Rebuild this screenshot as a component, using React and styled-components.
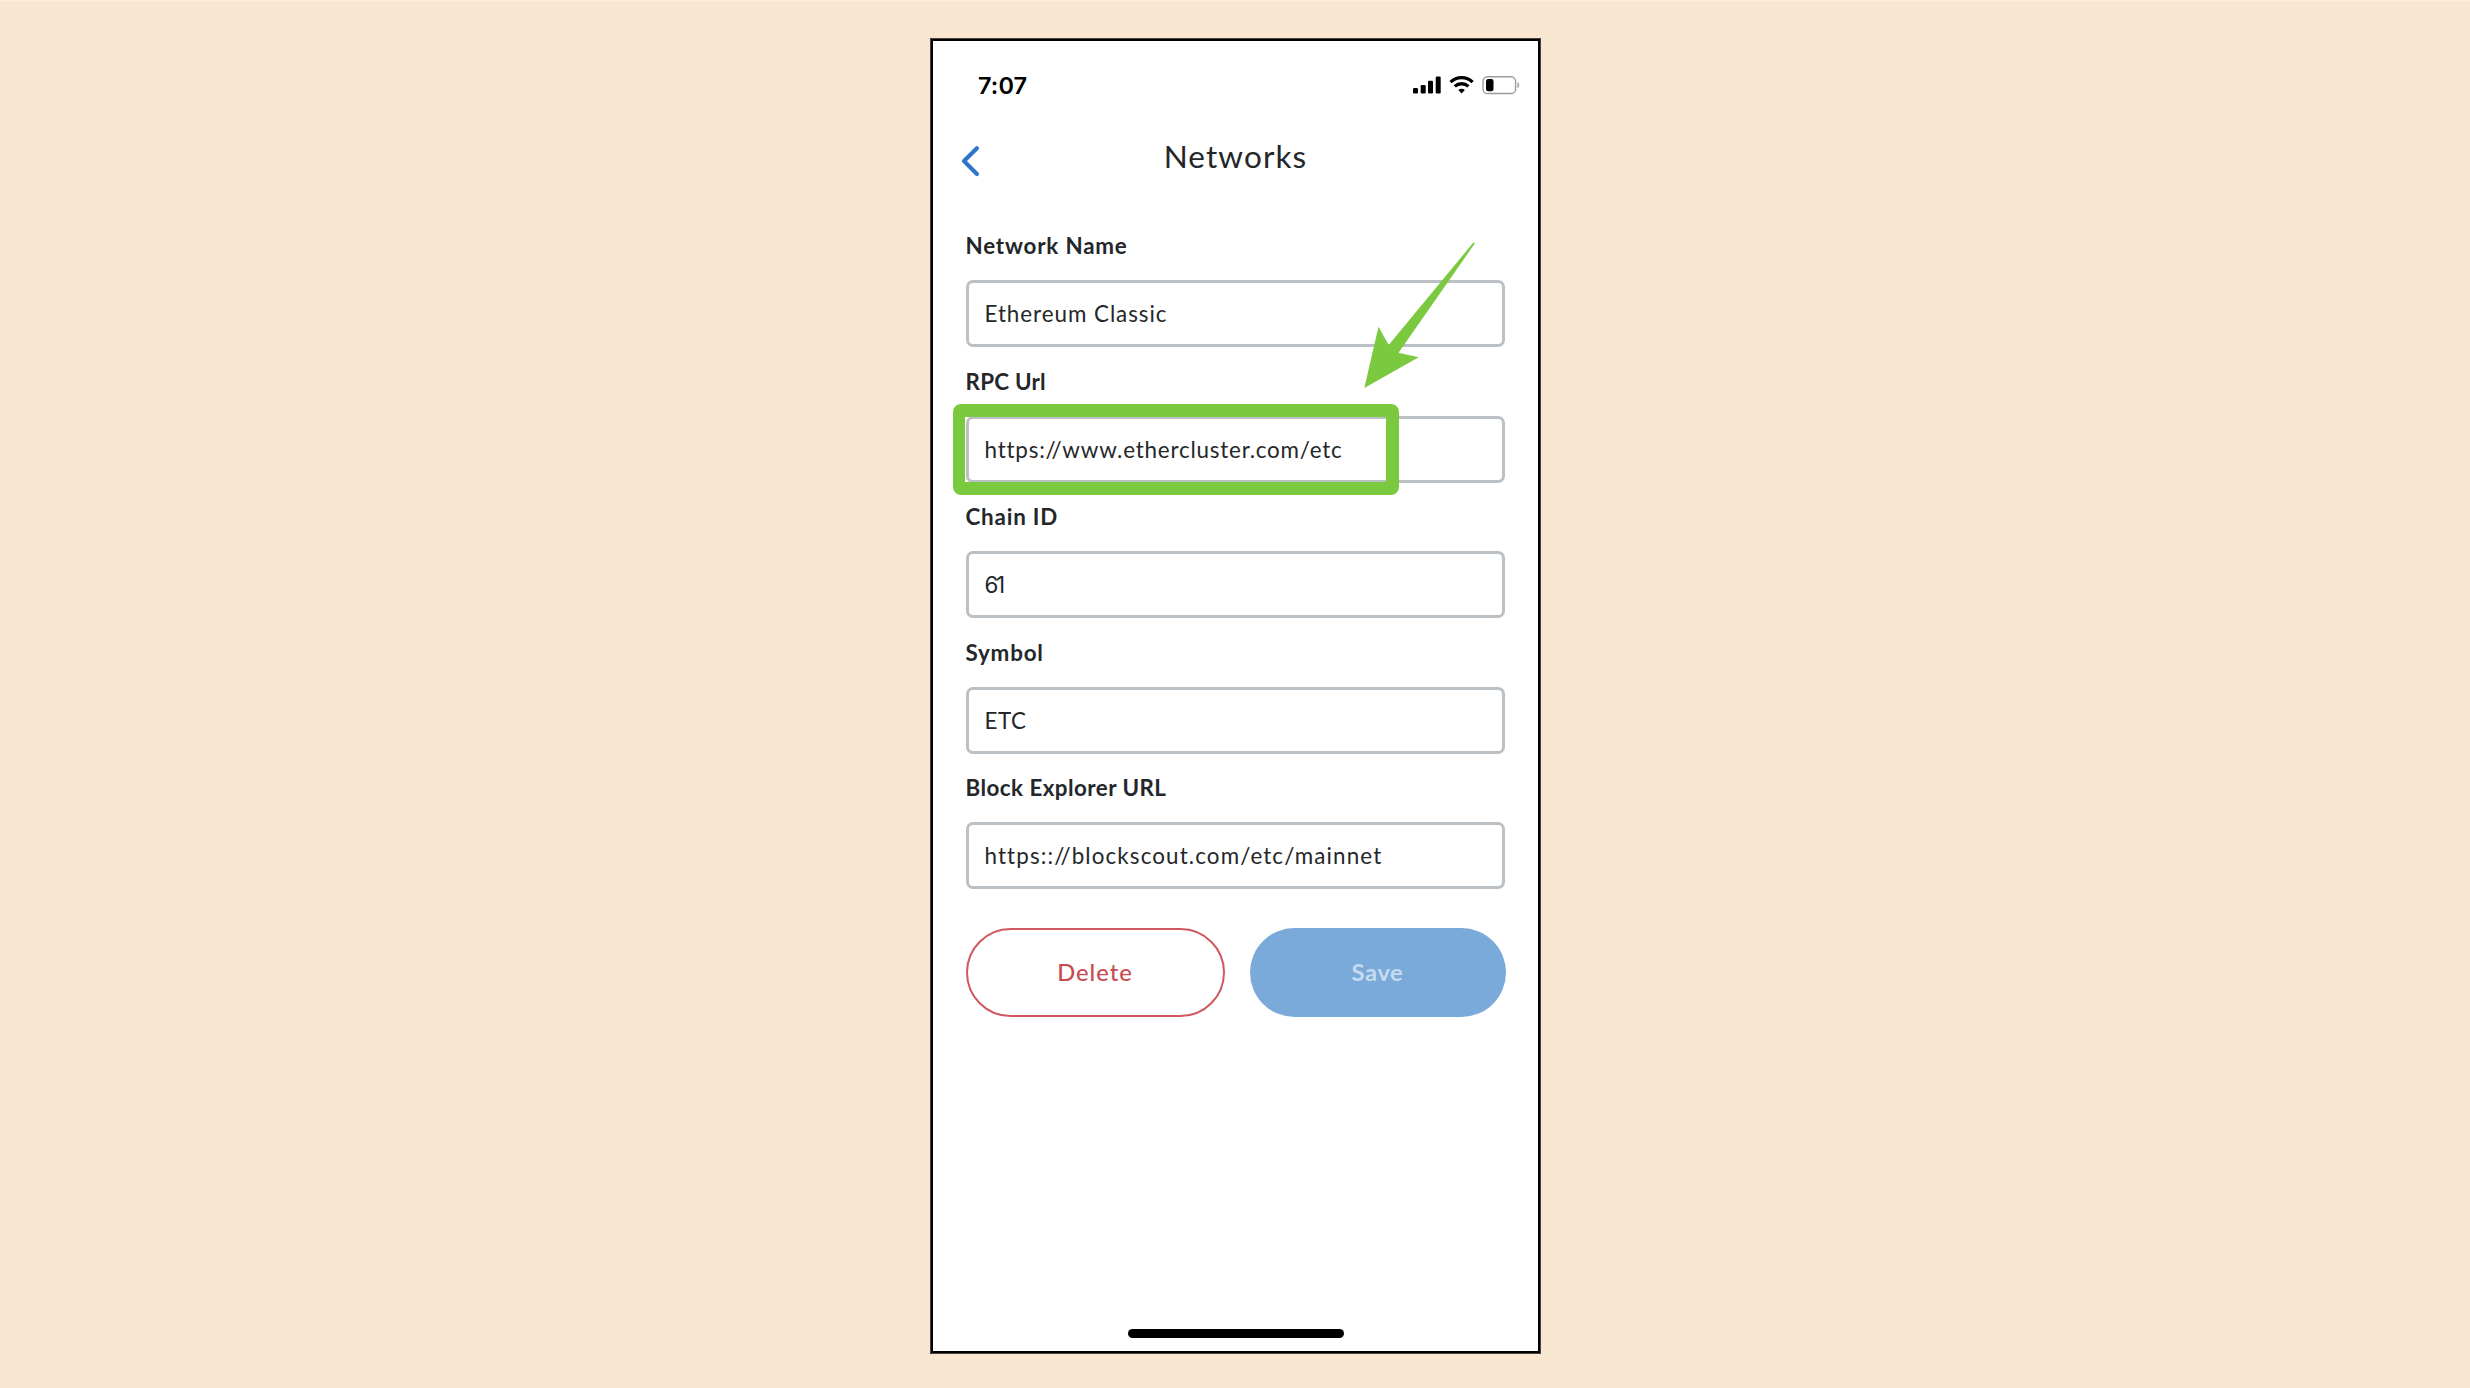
import React from 'react';
import styled, { createGlobalStyle } from 'styled-components';

const GlobalStyle = createGlobalStyle`
  * { box-sizing: border-box; }
  body {
    margin: 0;
    background: #f8e6d1;
    font-family: Lato, "Open Sans", sans-serif;
    color: #24272a;
  }
`;

const Page = styled.main`
  display: flex;
  justify-content: center;
  height: 1388px;
  padding: 38px 0 0 1px;
  border-top: 1px solid #fbeee1;
  overflow: hidden;
`;

const Phone = styled.section`
  position: relative;
  display: flex;
  flex-direction: column;
  width: 609px;
  height: 1314px;
  background: #fff;
  border: 2px solid #000;
  box-shadow: 0 0 0 1px #4a443e;
`;

const StatusBar = styled.div`
  display: flex;
  align-items: center;
  justify-content: space-between;
  height: 88px;
  padding: 0 18px 0 45px;
`;

const Clock = styled.span`
  padding-top: 2px;
  font: 600 23.5px/28px Inter, sans-serif;
  letter-spacing: 0.1px;
  color: #000;
`;

const StatusIcons = styled.svg`
  display: block;
  width: 108px;
  height: 20px;
`;

const Header = styled.header`
  display: grid;
  grid-template-columns: 60px 1fr 60px;
  align-items: center;
  height: 64px;
`;

const BackButton = styled.button`
  display: flex;
  justify-content: flex-start;
  padding: 0 0 0 27px;
  border: 0;
  background: none;
`;

const Title = styled.h1`
  margin: 0;
  padding: 0 0 10px;
  font-size: 31.5px;
  font-weight: 400;
  line-height: 38px;
  letter-spacing: 1.1px;
  text-align: center;
`;

const Form = styled.div`
  display: flex;
  flex-direction: column;
  gap: 19.5px;
  padding: 38px 33px 0 32.5px;
`;

const Field = styled.div`
  display: flex;
  flex-direction: column;
  gap: 20px;
`;

const Label = styled.label`
  font-size: 22.4px;
  font-weight: 700;
  line-height: 29px;
  letter-spacing: ${(p) => p.$tracking}px;
`;

const Value = styled.div`
  display: flex;
  align-items: center;
  height: 67px;
  padding: 1px 15px 0 16px;
  border: 3px solid #bbc0c5;
  border-radius: 7px;
  font-family: ${(p) => (p.$numeric ? 'Inter' : 'Lato')}, sans-serif;
  font-size: 22.4px;
  line-height: 28px;
  letter-spacing: ${(p) => p.$tracking}px;
  white-space: nowrap;
`;

const Actions = styled.div`
  display: grid;
  grid-template-columns: 259px 256px;
  justify-content: space-between;
  padding: 39px 32.5px 0;
`;

const Button = styled.button`
  height: 89px;
  padding: 0 0 2px;
  border-radius: 45px;
  font-family: Lato, sans-serif;
  font-size: 23.7px;
`;

const DeleteButton = styled(Button)`
  border: 2px solid #d0585f;
  background: #fff;
  color: #ca4a52;
  font-weight: 500;
  letter-spacing: 1px;
`;

const SaveButton = styled(Button)`
  border: 0;
  background: #79aada;
  color: #c6dbef;
  font-weight: 700;
  letter-spacing: 0.6px;
`;

const HomeIndicator = styled.div`
  align-self: center;
  width: 216px;
  height: 9px;
  margin: auto 0 13px;
  border-radius: 5px;
  background: #000;
`;

const Highlight = styled.div`
  position: absolute;
  left: 20px;
  top: 363px;
  width: 446px;
  height: 91px;
  border: 13px solid #7ac93f;
  border-left-width: 12px;
  border-radius: 8px;
`;

const Arrow = styled.svg`
  position: absolute;
  left: 427px;
  top: 197px;
  width: 118px;
  height: 154px;
`;

const fields = [
  { label: 'Network Name', labelTracking: 0.8, value: 'Ethereum Classic', tracking: 0.95 },
  { label: 'RPC Url', labelTracking: 0.25, value: 'https://www.ethercluster.com/etc', tracking: 0.8 },
  { label: 'Chain ID', labelTracking: 0.8, value: '61', tracking: -2.4, numeric: true },
  { label: 'Symbol', labelTracking: 0.8, value: 'ETC', tracking: 0.5 },
  { label: 'Block Explorer URL', labelTracking: 0.45, value: 'https:://blockscout.com/etc/mainnet', tracking: 1.12 },
];

export default function App() {
  return (
    <Page>
      <GlobalStyle />
      <Phone>
        <StatusBar>
          <Clock>7:07</Clock>
          <StatusIcons viewBox="0 0 108 20" aria-hidden="true">
            <rect x="1" y="13" width="5" height="5.5" rx="1.2" />
            <rect x="8.7" y="10" width="5" height="8.5" rx="1.2" />
            <rect x="16" y="5.8" width="5" height="12.7" rx="1.2" />
            <rect x="23.7" y="1.5" width="5" height="17" rx="1.2" />
            <g fill="none" stroke="#000" strokeWidth="3.3">
              <path d="M38.6 7.1a16 16 0 0 1 22 0" />
              <path d="M42.8 11.4a10 10 0 0 1 13.6 0" />
            </g>
            <path d="M46.3 15.1a5 5 0 0 1 6.6 0l-3.3 3.5z" />
            <rect x="71" y="1.7" width="32.6" height="16.8" rx="4.6" fill="none" stroke="#9c9c9c" strokeWidth="1.4" />
            <rect x="74" y="4" width="7.5" height="12.2" rx="2.2" />
            <path d="M105.9 7.6q2 2.4 0 5z" fill="#a2a2a2" stroke="#a2a2a2" strokeWidth=".8" />
          </StatusIcons>
        </StatusBar>
        <Header>
          <BackButton aria-label="Back">
            <svg width="20" height="32" viewBox="0 0 20 32">
              <path d="M16.9 3.2 4 16.1 16.9 29" fill="none" stroke="#3077cb" strokeWidth="4.2" strokeLinecap="round" strokeLinejoin="round" />
            </svg>
          </BackButton>
          <Title>Networks</Title>
        </Header>
        <Form>
          {fields.map((f) => (
            <Field key={f.label}>
              <Label $tracking={f.labelTracking}>{f.label}</Label>
              <Value $tracking={f.tracking} $numeric={f.numeric}>{f.value}</Value>
            </Field>
          ))}
        </Form>
        <Actions>
          <DeleteButton>Delete</DeleteButton>
          <SaveButton>Save</SaveButton>
        </Actions>
        <HomeIndicator />
        <Highlight />
        <Arrow viewBox="1360 238 118 154" aria-hidden="true">
          <path d="M1364.3 388 1378.5 326.7 1388.7 345 1473.6 242.3 1474.8 243.5 1398.5 352.8 1418.7 357.3Z" fill="#7ac93f" />
        </Arrow>
      </Phone>
    </Page>
  );
}
